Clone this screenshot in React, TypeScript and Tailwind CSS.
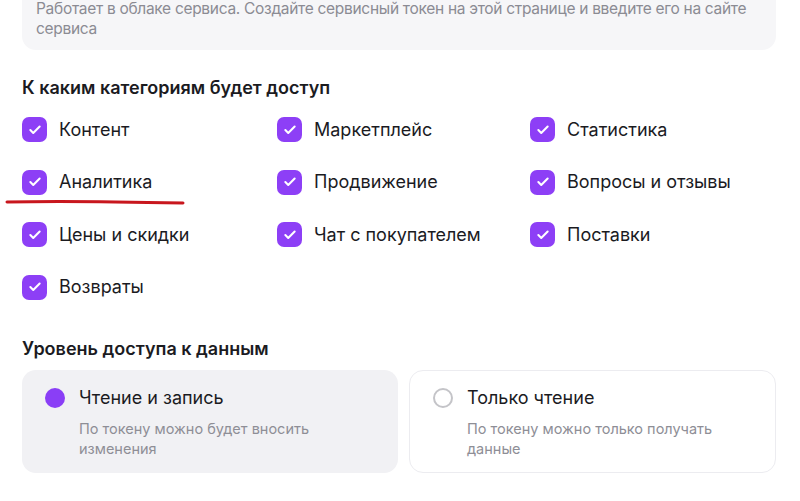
import { Check } from 'lucide-react';

const categories = [
  'Контент',
  'Маркетплейс',
  'Статистика',
  'Аналитика',
  'Продвижение',
  'Вопросы и отзывы',
  'Цены и скидки',
  'Чат с покупателем',
  'Поставки',
  'Возвраты',
];

const levels = [
  { title: 'Чтение и запись', hint: 'По токену можно будет вносить изменения', active: true },
  { title: 'Только чтение', hint: 'По токену можно только получать данные', active: false },
];

function Checkbox() {
  return (
    <div className="w-[25px] h-[25px] rounded-[7px] bg-[#8d3ff6] flex items-center justify-center flex-shrink-0">
      <Check className="w-[14px] h-[14px] text-white" strokeWidth={3.5} />
    </div>
  );
}

export default function App() {
  return (
    <div
      className="relative w-[800px] h-[501px] overflow-hidden bg-white text-[#1b1b1f]"
      style={{ fontFamily: 'Inter, "Noto Sans", sans-serif' }}
    >
      <div className="mx-[22px] w-[754px]">
        <div className="bg-[#f6f6f8] rounded-b-[14px] px-[14px] pb-[11px]">
          <p className="-mt-[1px] text-[15.5px] leading-[20px] text-[#8b8b93] tracking-[-0.3px]">
            Работает в облаке сервиса. Создайте сервисный токен на этой странице и введите его на сайте
            <br />
            сервиса
          </p>
        </div>

        <h2 className="mt-[26px] text-[18px] leading-[24px] font-semibold">К каким категориям будет доступ</h2>

        <div className="mt-[17px] grid grid-cols-[255px_253px_1fr] gap-y-[27.5px]">
          {categories.map((c) => (
            <div key={c} className="flex items-center gap-[12px] h-[25px]">
              <Checkbox />
              <span className="text-[18px] leading-[24px]">{c}</span>
            </div>
          ))}
        </div>

        <h2 className="mt-[37px] text-[18px] leading-[24px] font-semibold">Уровень доступа к данным</h2>

        <div className="mt-[9px] grid grid-cols-[376px_1fr] gap-[11px]">
          {levels.map((l) => (
            <div
              key={l.title}
              className={
                l.active
                  ? 'h-[103px] rounded-[14px] bg-[#f1f1f4] pt-[16px] pl-[23px] pr-[20px]'
                  : 'h-[103px] rounded-[14px] bg-white border border-[#ececf0] pt-[15px] pl-[23px] pr-[20px]'
              }
            >
              <div className="flex items-center gap-[14px] h-[24px]">
                {l.active ? (
                  <div className="w-[20px] h-[20px] rounded-full bg-[#8a3ef6] flex-shrink-0" />
                ) : (
                  <div className="w-[20px] h-[20px] rounded-full border-2 border-[#c4c4c8] flex-shrink-0" />
                )}
                <span className="text-[18px] leading-[24px]">{l.title}</span>
              </div>
              <p className="mt-[9px] ml-[34px] w-[262px] text-[14.5px] leading-[20px] text-[#8e8e96]">{l.hint}</p>
            </div>
          ))}
        </div>
      </div>

      <svg className="absolute left-[5px] top-[198px]" width="180" height="8" viewBox="0 0 180 8">
        <path d="M2 4 Q60 2.5 178 5" stroke="#c8161d" strokeWidth="3" strokeLinecap="round" fill="none" />
      </svg>
    </div>
  );
}
